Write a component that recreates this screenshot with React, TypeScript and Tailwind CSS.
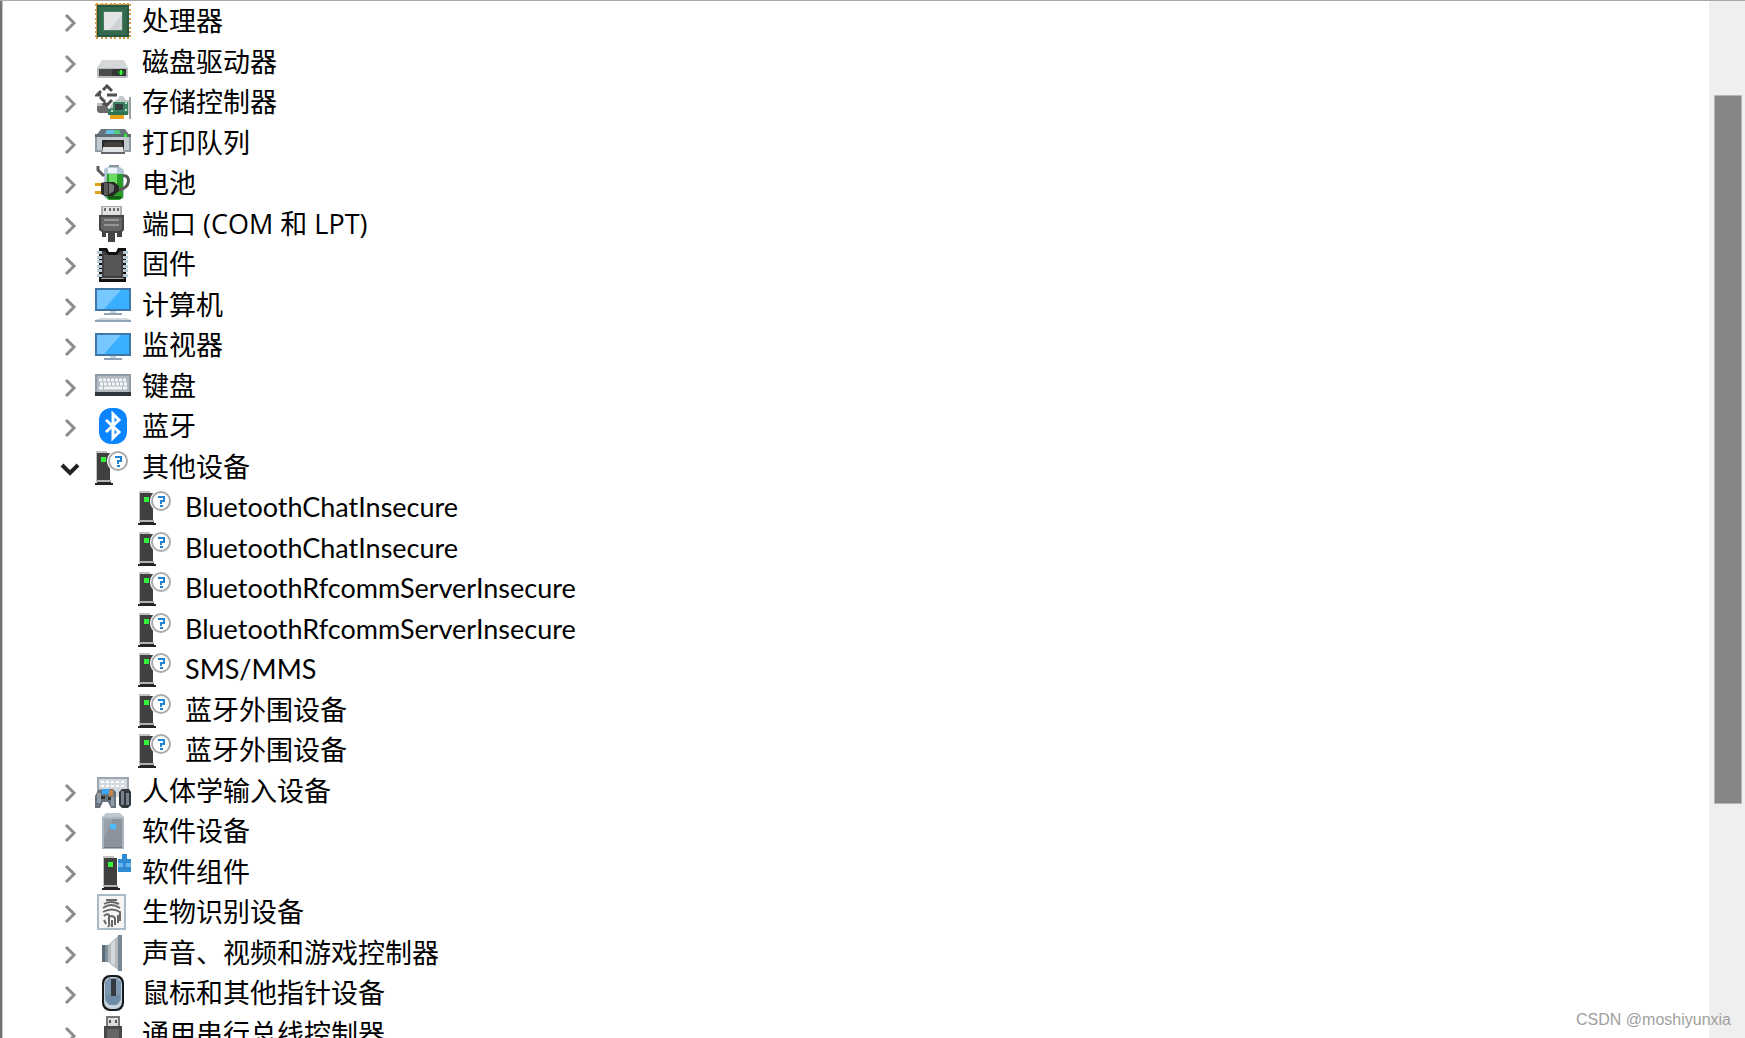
import { useState, type ReactNode } from "react";

type IconName =
  | "cpu" | "disk" | "storage" | "printer" | "battery" | "port" | "firmware"
  | "computer" | "monitor" | "keyboard" | "bluetooth" | "unknown" | "hid"
  | "softdevice" | "component" | "biometric" | "sound" | "mouse" | "usb";

function Tower({ x = 0 }: { x?: number }) {
  return (
    <g transform={`translate(${x} 2)`}>
      <path d="M1 0h11v30H1z" fill="#c3c3c3" />
      <path d="M2 2h13v27H2z" fill="#404040" />
      <path d="M1 29h15v2H1z" fill="#b4b4b4" />
      <path d="M2 31h14v1h2v2H0v-2h2z" fill="#252525" />
      <path d="M6 6h5v5H6z" fill="#34f23a" />
    </g>
  );
}

function Screen() {
  return (
    <>
      <path d="M0 0h36v23H0z" fill="#3f77a6" />
      <path d="M2 2h32v19H2z" fill="#3aaeff" />
      <path d="M2 2h24L9 21H2z" fill="#76c8ff" />
      <path d="M15 23h6v2h-6z" fill="#c5d0da" />
      <path d="M9 25h18v2H9z" fill="#8fa2b6" />
    </>
  );
}

const pins = [1, 6, 10, 15, 19, 24, 28, 32];
const chipLegs = [5, 10, 14, 19, 23, 28];
const drawings: Record<IconName, ReactNode> = {
  cpu: (
    <>
      {pins.map((p) => (
        <g key={p} fill="#d39a4a">
          <path d={`M${p} 0h2v36h-2z`} />
          <path d={`M0 ${p}h36v2H0z`} />
        </g>
      ))}
      <path d="M2 2h32v32H2z" fill="#27573f" />
      <path d="M4 4h28v28H4z" fill="#35694e" />
      <path d="M8 8h20v20H8z" fill="#4a7c63" />
      <path d="M9 9h18v18H9z" fill="#e2e4e5" />
      <path d="M27 12v15H14z" fill="#d0d3d5" />
    </>
  ),
  disk: (
    <>
      <path d="M7 16h22l4 8H2z" fill="#d5d8d9" />
      <path d="M2 24h31v8l-1 2H3l-1-2z" fill="#b9bcbe" />
      <path d="M4 25h27v7H4z" fill="#4b4b4b" />
      <path d="M17 25h14v7H17z" fill="#363636" />
      <path d="M23 27h6v3h-6z" fill="#168e1e" />
      <path d="M25 26h2v5h-2z" fill="#42f54a" />
    </>
  ),
  storage: (
    <>
      <path d="M2 19h8l6 10H4l-2-2z" fill="#6b6b6b" />
      <path d="M2 19h5v3H2z" fill="#bcbcbc" />
      <path d="M17 20l8-8h3l3 4h3v14H13v-4z" fill="#c2c8c5" />
      <path d="M18 18h15v12H13v-5l5-1z" fill="#3b8161" />
      <path d="M13 28h20v3H13z" fill="#2d7453" />
      <path d="M20 20h8v6h-8z" fill="#343d3b" />
      <path d="M30 18h2v2h-2zM30 25h2v2h-2zM16 26h2v2h-2z" fill="#b9d8c8" />
      <path d="M15 31h14v4H15z" fill="#e9a419" />
      <path d="M34 13h2v22h-2z" fill="#9aa2a2" />
      <path d="M12 3l-8 8 8 8 6-6h4v-3h-3z" fill="#fff" stroke="#fff" strokeWidth="4" strokeLinejoin="round" />
      <path d="M8 6l4-4 5 5M6 7l-4 4h4M5 13l5 5M9 19l3 2 5-5M12 11h10" fill="none" stroke="#505050" strokeWidth="3" />
    </>
  ),
  printer: (
    <>
      <path d="M6 4h24l5 7H1z" fill="#68737c" />
      <path d="M12 5h12l2 4H10z" fill="#52c97b" />
      <path d="M12 5h7v4h-9z" fill="#64bde5" />
      <path d="M0 9h36v3H0z" fill="#5f6b73" />
      <path d="M0 12h36v15H0z" fill="#8f9ba5" />
      <path d="M2 12h32v13H2z" fill="#c3cbd1" />
      <path d="M29 9h3v3h-3z" fill="#2fe637" />
      <path d="M7 15h22v12H7z" fill="#2b2b2b" />
      <path d="M10 17h16l3 10H7z" fill="#43413f" />
      <path d="M8 22h20l1 6H7z" fill="#dfe3e6" />
      <path d="M6 27h24v2H6z" fill="#61676c" />
    </>
  ),
  battery: (
    <>
      <path d="M14 0h10v3H14z" fill="#8a959b" />
      <path d="M9 4l4-2h12l4 3v27l-4 3H13l-4-3z" fill="#b4c8d3" />
      <path d="M13 3h9v5h-9z" fill="#eaf4fa" />
      <path d="M12 9h16v24l-4 2H14l-3-3z" fill="#2a9c28" />
      <path d="M14 9h8v16h-8z" fill="#69dc62" />
      <path d="M12 31h14v3H14z" fill="#155e16" />
      <path d="M3 1v4l6 6" fill="none" stroke="#5a5a5a" strokeWidth="3" />
      <path d="M28 11c8-2 8 13-5 14" fill="none" stroke="#585858" strokeWidth="3" />
      <path d="M0 18h8v3H0zM0 26h8v3H0z" fill="#dda018" />
      <path d="M6 18l4-1h9l5 4v5l-6 5h-8l-4-2z" fill="#292929" />
      <path d="M9 18h4v12H9z" fill="#5a5a5a" />
      <path d="M14 18l5 2v6l-5 3z" fill="#787878" />
    </>
  ),
  port: (
    <>
      <path d="M6 0h21v10H6z" fill="#adadad" />
      <path d="M8 1h17v9H8z" fill="#e1e1e1" />
      <path d="M9 2h2v3H9zM14 2h2v3h-2zM18 2h2v3h-2zM22 2h2v3h-2z" fill="#6b6b6b" />
      <path d="M4 9h25v15l-2 2v5h-5v-4h-2v9h-7v-9h-2v4H7v-5l-3-2z" fill="#454545" />
      <path d="M6 11h21v12l-3 2H9l-3-2z" fill="#666" />
      <path d="M9 13h15v2H9zM9 18h15v2H9z" fill="#969696" />
    </>
  ),
  firmware: (
    <>
      <path d="M4 2h8l2 4h7l2-4h8v34H4z" fill="#111" />
      {chipLegs.map((y) => (
        <path key={y} d={`M2 ${y}h5v3H2zM28 ${y}h5v3h-5z`} fill="#b4c8d6" />
      ))}
      <path d="M7 5h3l3 4h9l3-4h3v27H7z" fill="#404040" />
      <path d="M9 9h17v21H9z" fill="#575757" />
      <path d="M6 32h23v1H6z" fill="#aaa" />
    </>
  ),
  computer: (
    <>
      <g transform="translate(0 1)"><Screen /></g>
      <path d="M5 31h26l5 2H0z" fill="#cfd8df" />
      <path d="M0 33h36v2H0z" fill="#8fa2b6" />
    </>
  ),
  monitor: (
    <g transform="translate(0 6)"><Screen /></g>
  ),
  keyboard: (
    <>
      <path d="M0 6h36v20H0z" fill="#8f9ba6" />
      <path d="M2 8h32v16H2z" fill="#b1bac2" />
      <path d="M4 12h28M5 16h28" stroke="#f6f6f6" strokeWidth="3" strokeDasharray="3 1" />
      <path d="M4 20h4M9 20h18M28 20h4" stroke="#f1f3f4" strokeWidth="3" />
      <path d="M0 24h36v4H0z" fill="#30353b" />
    </>
  ),
  bluetooth: (
    <>
      <rect x="4" y="0" width="28" height="36" rx="12" fill="#0a84ff" />
      <path d="M11 12l13 12-6 6V6l6 6-13 12" fill="none" stroke="#fff" strokeWidth="3" />
    </>
  ),
  unknown: (
    <>
      <Tower />
      <circle cx="23" cy="12" r="11" fill="#fff" />
      <circle cx="23" cy="12" r="9" fill="#fff" stroke="#a6abad" strokeWidth="2" />
      <path d="M20 8h6v4h-3v3" fill="none" stroke="#2383d3" strokeWidth="2" />
      <path d="M22 16h3v2h-3z" fill="#2383d3" />
    </>
  ),
  hid: (
    <>
      <path d="M2 4h32v20H2z" fill="#9aa6b1" />
      <path d="M4 6h28v18H4z" fill="#d4dadd" />
      <path d="M6 9h24M6 13h24" stroke="#fff" strokeWidth="2" strokeDasharray="3 2" />
      <path d="M3 17l5-1h10l3 3v16h-5l-3-6H8l-3 6H0V23z" fill="#69737d" />
      <path d="M2 20h4v10H2zM16 24h3v9h-3z" fill="#919da7" />
      <path d="M7 16h7v5H7z" fill="#38a6fa" />
      <path d="M14 17h4v6h-4z" fill="#c68749" />
      <path d="M6 23h4v3H6zM13 24h3v3h-3z" fill="#333" />
      <path d="M27 16h7l2 3v13l-3 3h-6l-3-3V19z" fill="#32373c" />
      <path d="M26 18h3v14h-3zM31 20h3v12h-3z" fill="#76818b" />
    </>
  ),
  softdevice: (
    <>
      <path d="M11 0h14l4 4H7z" fill="#c1c8cd" />
      <path d="M7 4h22v32H7z" fill="#a9b5bf" />
      <path d="M9 6h18v28H9z" fill="#8b949d" />
      <path d="M9 6h9L9 25z" fill="#99a2aa" />
      <path d="M15 11h6v5h-6z" fill="#4dbbff" />
      <path d="M9 34h18v1H9z" fill="#6f7881" />
    </>
  ),
  component: (
    <>
      <Tower x={7} />
      <path d="M27 0h5v5h4v13H23V5h4z" fill="#2f8bd3" />
      <path d="M23 9h5v4h-5zM31 9h5v4h-5z" fill="#69b5ec" />
    </>
  ),
  biometric: (
    <>
      <path d="M2 0h29v36H2z" fill="#a7bcc7" />
      <path d="M4 2h25v32H4z" fill="#f5f5f5" />
      <path
        d="M11 6h11M9 10q7-4 15 0M8 14q8-6 17 0M8 18q9-5 17 0v9M9 22q3-3 5-1v9M14 24q2-4 6 0v7M9 26l2 4M23 21v8M17 26v7M13 33l2-3"
        fill="none" stroke="#686868" strokeWidth="2"
      />
    </>
  ),
  sound: (
    <>
      <path d="M7 10h8v17H7z" fill="#7f929f" />
      <path d="M7 10h3v17H7z" fill="#5c6c77" />
      <path d="M13 10L23 1h3v34h-3L13 27z" fill="#b6babc" />
      <path d="M16 8l4-3v26l-4-3z" fill="#d6d8d9" />
      <path d="M23 0h4v36h-4z" fill="#778996" />
    </>
  ),
  mouse: (
    <>
      <rect x="7" y="0" width="22" height="36" rx="8" fill="#171a1c" />
      <rect x="9" y="2" width="18" height="32" rx="7" fill="#c5d3dc" />
      <path d="M10 7l4-4h8l4 4v18l-4 5h-8l-4-5z" fill="#7c97b0" />
      <path d="M11 20h14v6l-5 4h-5l-4-4z" fill="#6d8ba6" />
      <path d="M16 4h5v17h-5z" fill="#343a40" />
    </>
  ),
  usb: (
    <>
      <path d="M11 0h14v11H11z" fill="#777" />
      <path d="M13 2h10v9H13z" fill="#dcdcdc" />
      <path d="M14 4h2v3h-2zM20 4h2v3h-2z" fill="#555" />
      <path d="M9 10h18v20l-5 6h-8l-5-6z" fill="#494949" />
      <path d="M12 13h12v15H12z" fill="#656565" />
    </>
  ),
};

function DeviceIcon({ name }: { name: IconName }) {
  return (
    <svg viewBox="0 0 36 36" className="size-9 shrink-0" aria-hidden="true">
      {drawings[name]}
    </svg>
  );
}

type Item = { icon: IconName; label: string; children?: string[] };

const categories: Item[] = [
  { icon: "cpu", label: "处理器" },
  { icon: "disk", label: "磁盘驱动器" },
  { icon: "storage", label: "存储控制器" },
  { icon: "printer", label: "打印队列" },
  { icon: "battery", label: "电池" },
  { icon: "port", label: "端口 (COM 和 LPT)" },
  { icon: "firmware", label: "固件" },
  { icon: "computer", label: "计算机" },
  { icon: "monitor", label: "监视器" },
  { icon: "keyboard", label: "键盘" },
  { icon: "bluetooth", label: "蓝牙" },
  {
    icon: "unknown",
    label: "其他设备",
    children: [
      "BluetoothChatInsecure",
      "BluetoothChatInsecure",
      "BluetoothRfcommServerInsecure",
      "BluetoothRfcommServerInsecure",
      "SMS/MMS",
      "蓝牙外围设备",
      "蓝牙外围设备",
    ],
  },
  { icon: "hid", label: "人体学输入设备" },
  { icon: "softdevice", label: "软件设备" },
  { icon: "component", label: "软件组件" },
  { icon: "biometric", label: "生物识别设备" },
  { icon: "sound", label: "声音、视频和游戏控制器" },
  { icon: "mouse", label: "鼠标和其他指针设备" },
  { icon: "usb", label: "通用串行总线控制器" },
];

function Label({ text }: { text: string }) {
  const latin = !/[\u4e00-\u9fff]/.test(text);
  return (
    <span
      className={
        latin
          ? "whitespace-nowrap font-['Lato',sans-serif] text-[27px] leading-9"
          : "whitespace-nowrap font-['Open_Sans','Noto_Sans_CJK_SC',sans-serif] text-[27px] leading-9"
      }
    >
      {text}
    </span>
  );
}

function Chevron({ open }: { open: boolean }) {
  return (
    <svg viewBox="0 0 24 24" className="size-6" fill="none" aria-hidden="true">
      {open ? (
        <path d="M3 10l8 8 8-8" stroke="#222" strokeWidth="4" />
      ) : (
        <path d="M7 6l8 8-8 8" stroke="#8c8c8c" strokeWidth="3" />
      )}
    </svg>
  );
}

export default function App() {
  const [open, setOpen] = useState<Record<string, boolean>>({ 其他设备: true });

  const rows = categories.flatMap((c) => [
    { key: c.label, icon: c.icon, label: c.label, level: 1 },
    ...(open[c.label] && c.children
      ? c.children.map((label, i) => ({ key: `${c.label}-${i}`, icon: c.icon, label, level: 2 }))
      : []),
  ]);

  return (
    <div className="relative flex h-screen overflow-hidden border-t border-[#a8a8a8] bg-white text-black">
      <div className="w-[3px] shrink-0 border-r border-[#c4c4c4] bg-[#747474]" />
      <ul id="devices" role="tree" aria-label="设备" className="min-w-0 flex-1 overflow-hidden pl-14">
        {rows.map((row) => (
          <li
            key={row.key}
            role="treeitem"
            aria-level={row.level}
            aria-expanded={row.level === 1 ? !!open[row.label] : undefined}
            className={
              row.level === 1
                ? "flex items-center gap-[11px] odd:h-10 even:h-[41px]"
                : "flex items-center gap-[11px] pl-[79px] odd:h-10 even:h-[41px]"
            }
          >
            {row.level === 1 && (
              <button
                type="button"
                className="pr-px"
                aria-label={`展开或折叠 ${row.label}`}
                onClick={() => setOpen((o) => ({ ...o, [row.label]: !o[row.label] }))}
              >
                <Chevron open={!!open[row.label]} />
              </button>
            )}
            <DeviceIcon name={row.icon} />
            <Label text={row.label} />
          </li>
        ))}
      </ul>
      <div
        role="scrollbar"
        aria-label="滚动"
        aria-orientation="vertical"
        aria-controls="devices"
        aria-valuenow={28}
        className="flex w-9 shrink-0 flex-col bg-[#efefef] pr-[3px] pl-[5px]"
      >
        <div className="grow-[94]" />
        <div className="grow-[709] border border-[#b4b4b4] bg-[#868686]" />
        <div className="grow-[234]" />
      </div>
      <p className="absolute right-3.5 bottom-2 font-['Liberation_Sans',sans-serif] text-base leading-5 text-[#a0a0a0]">
        CSDN @moshiyunxia
      </p>
    </div>
  );
}
